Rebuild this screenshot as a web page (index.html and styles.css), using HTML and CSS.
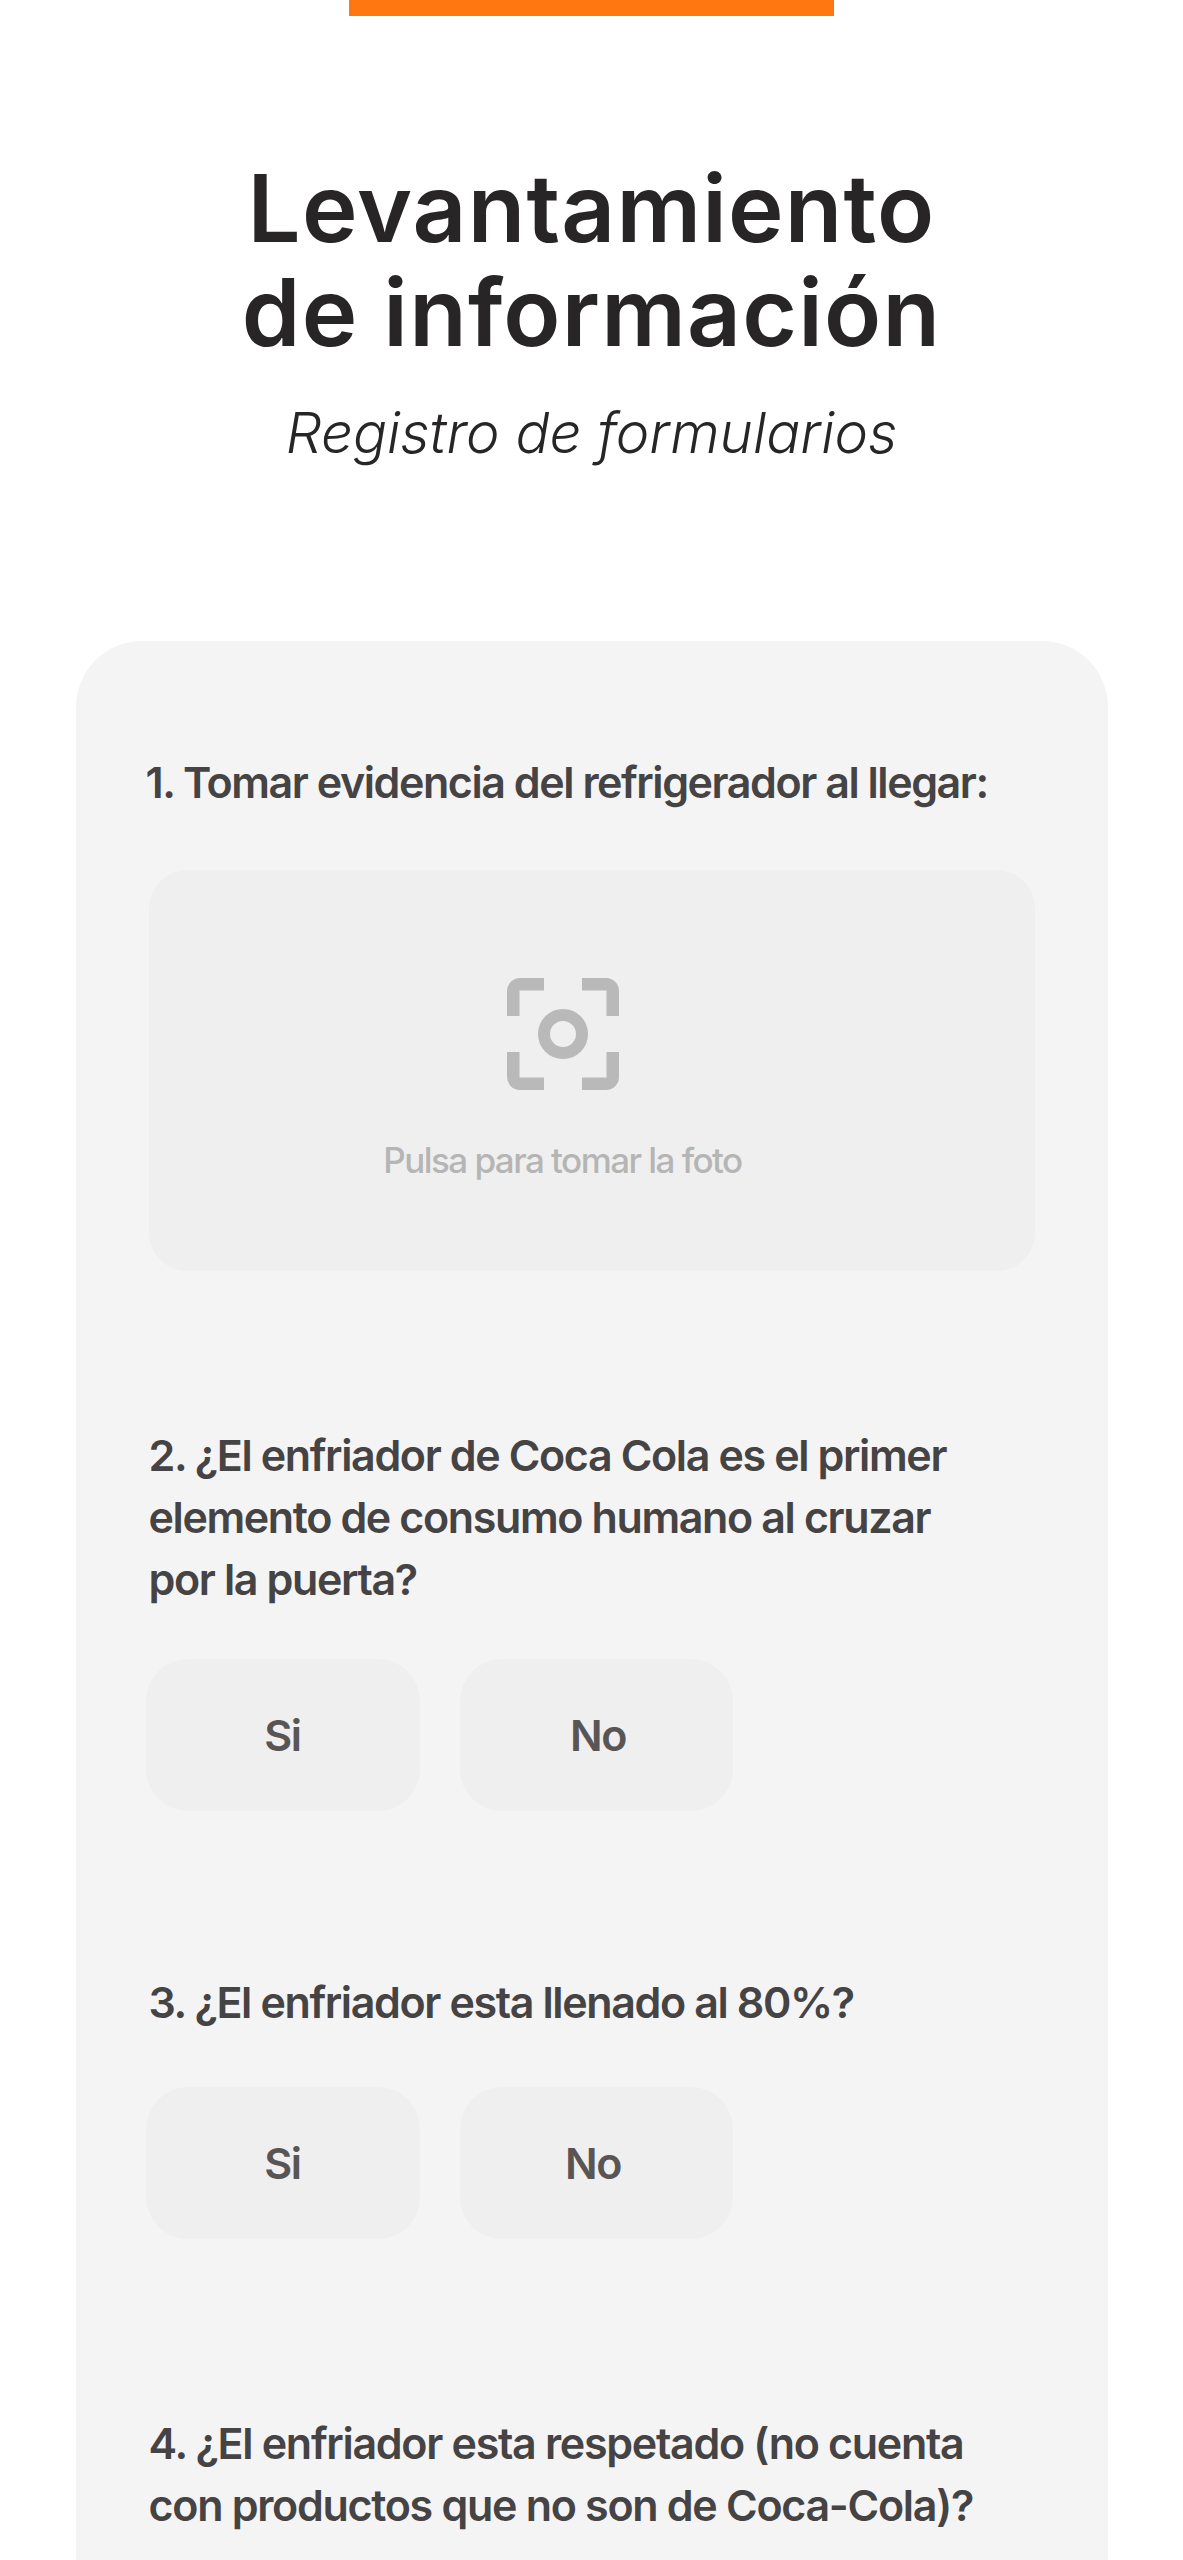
FILE: index.html
```html
<!DOCTYPE html>
<html lang="es">
<head>
<meta charset="utf-8">
<title>Levantamiento de información</title>
<link rel="stylesheet" href="styles.css">
</head>
<body>
<div class="page">
  <div class="top-bar"></div>
  <header class="head">
    <h1 class="title">Levantamiento<br>de información</h1>
    <p class="subtitle">Registro de formularios</p>
  </header>
  <main class="card">
    <section class="q q-first">
      <h2 class="q-text q-text-first">1. Tomar evidencia del refrigerador al llegar:</h2>
      <div class="upload">
        <svg class="upload-icon" viewBox="0 0 112 112" width="112" height="112" fill="#b9b9b9">
          <path d="M0 38V13A13 13 0 0 1 13 0H37V12.5H12.5V38Z"/>
          <path d="M75 0H99A13 13 0 0 1 112 13V38H99.5V12.5H75Z"/>
          <path d="M0 74V99A13 13 0 0 0 13 112H37V99.5H12.5V74Z"/>
          <path d="M75 112H99A13 13 0 0 0 112 99V74H99.5V99.5H75Z"/>
          <circle cx="56" cy="56" r="19" fill="none" stroke="#b9b9b9" stroke-width="12"/>
        </svg>
        <span class="upload-text">Pulsa para tomar la foto</span>
      </div>
    </section>
    <section class="q q-second">
      <h2 class="q-text">2. ¿El enfriador de Coca Cola es el primer<br>elemento de consumo humano al cruzar<br>por la puerta?</h2>
      <div class="choices">
        <button class="choice choice-si">Si</button>
        <button class="choice choice-no">No</button>
      </div>
    </section>
    <section class="q q-third">
      <h2 class="q-text">3. ¿El enfriador esta llenado al 80%?</h2>
      <div class="choices choices-wide">
        <button class="choice choice-si">Si</button>
        <button class="choice choice-no choice-no-alt">No</button>
      </div>
    </section>
    <section class="q q-fourth">
      <h2 class="q-text q-text-loose">4. ¿El enfriador esta respetado (no cuenta<br>con productos que no son de Coca-Cola)?</h2>
    </section>
  </main>
</div>
</body>
</html>
```

FILE: styles.css
```css
* { box-sizing: border-box; }
html, body { margin: 0; padding: 0; background: #fff; }
body { height: 2560px; overflow: hidden; }
.page { display: flex; flex-direction: column; align-items: center; height: 2560px; overflow: hidden; }
.top-bar { width: 485px; height: 16px; background: #ff7710; flex: none; }
.head { text-align: center; padding-top: 140px; flex: none; }
.title {
  margin: 0;
  font-family: "Inter", "Liberation Sans", sans-serif;
  font-weight: 600;
  font-size: 94px;
  line-height: 104px;
  letter-spacing: 1.2px;
  color: #272525;
}
.subtitle {
  margin: 33px 0 0;
  font-family: "Inter", "Liberation Sans", sans-serif;
  font-style: italic;
  font-weight: 300;
  font-size: 56.6px;
  line-height: 72px;
  color: #272525;
}
.card {
  flex: none;
  width: 1032px;
  margin-top: 172px;
  padding: 0 73px;
  background: #f4f4f4;
  border-radius: 66px 66px 0 0;
  height: 2000px;
}
.q-text {
  margin: 0;
  font-family: "Inter", "Liberation Sans", sans-serif;
  font-weight: 600;
  font-size: 43px;
  line-height: 62px;
  letter-spacing: -1.38px;
  color: #454343;
}
.q-first { padding-top: 110px; }
.q-text-first { margin-left: -3px; letter-spacing: -1.45px; }
.q-text-loose { letter-spacing: -1.3px; }
.upload {
  display: flex;
  flex-direction: column;
  align-items: center;
  margin-top: 57px;
  height: 401px;
  padding-top: 108px;
  padding-right: 58px;
  background: #efefef;
  border-radius: 38px;
}
.upload-icon { display: block; flex: none; }
.upload-text {
  margin-top: 48px;
  font-family: "Inter", "Liberation Sans", sans-serif;
  font-weight: 500;
  font-size: 35px;
  line-height: 44px;
  letter-spacing: -1.55px;
  color: #b5b5b5;
}
.q-second { margin-top: 153px; }
.q-third { margin-top: 160px; }
.q-fourth { margin-top: 173px; }
.choices { display: flex; gap: 40px; margin: 49px 0 0 -3px; }
.choices-wide { margin-top: 54px; }
.choice {
  height: 152px;
  padding: 0;
  border: 0;
  border-radius: 42px;
  background: #efefef;
  font-family: "Inter", "Liberation Sans", sans-serif;
  font-weight: 600;
  font-size: 43px;
  letter-spacing: -1.45px;
  color: #5a5555;
}
.choice-si { width: 274px; }
.choice-no { width: 273px; padding-left: 4px; }
.choice-no-alt { padding-left: 0; padding-right: 6px; }
```
